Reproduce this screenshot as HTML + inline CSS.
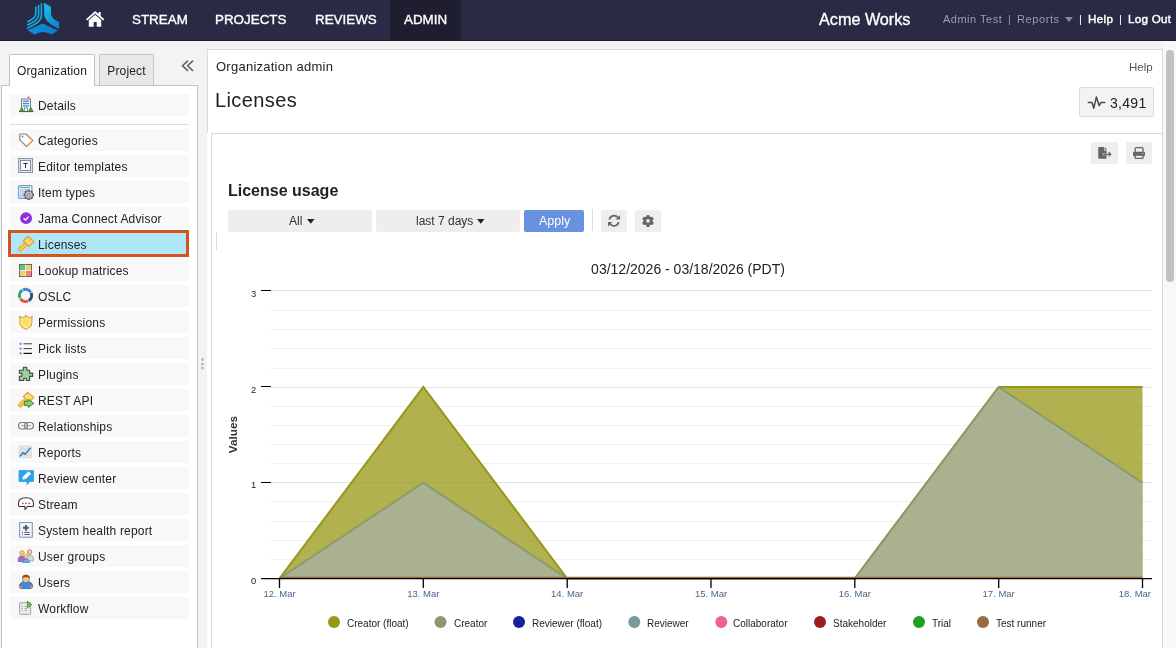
<!DOCTYPE html>
<html><head><meta charset="utf-8">
<style>
*{box-sizing:border-box;margin:0;padding:0}
html,body{width:1176px;height:648px;overflow:hidden;background:#f3f3f3;font-family:"Liberation Sans",sans-serif;color:#222;-webkit-font-smoothing:antialiased}
.abs{position:absolute}
#nav{position:absolute;left:0;top:0;width:1176px;height:41px;background:#2b2a44;border-bottom:1px solid #1e1d31}
.nt{position:absolute;top:12px;color:#fff;font-size:13.4px;line-height:16px;white-space:nowrap;-webkit-text-stroke:0.35px #fff}
.rt{position:absolute;top:12px;font-size:11px;line-height:14px;white-space:nowrap}
#side{position:absolute;left:1px;top:85px;width:197px;height:580px;background:#fff;border:1px solid #c4c4c4}
.tab{position:absolute;top:54px;border:1px solid #c4c4c4;border-bottom:none;font-size:12px;line-height:14px;padding-top:9px;letter-spacing:0.17px;text-align:center;border-radius:2px 2px 0 0;color:#222}
.item{position:absolute;left:10px;width:179px;height:22px;background:#f8f8f8;font-size:12px;line-height:24px;letter-spacing:0.18px;padding-left:28px;white-space:nowrap;color:#222}
.item svg{position:absolute;left:8px;top:3px}
.btn{position:absolute;background:#eeeeee;border-radius:2px}
</style></head><body><div style="position:absolute;left:0;top:0;width:1176px;height:648px;will-change:transform">
<div id="nav">
  <svg class="abs" style="left:22px;top:0px" width="44" height="40" viewBox="0 0 44 40">
    <defs><linearGradient id="lg1" x1="0" y1="0" x2="0.6" y2="1"><stop offset="0" stop-color="#1ec0f0"/><stop offset="1" stop-color="#0a8ad2"/></linearGradient>
    <linearGradient id="lg2" x1="0" y1="0" x2="1" y2="0"><stop offset="0" stop-color="#0c92d8"/><stop offset="1" stop-color="#0a7cc8"/></linearGradient></defs>
    <path d="M21.9,2.8 L29,6.8 L29,13.5 Q29.3,17.5 33,19.8 L37,22 L37,29 L30,24.9 Q23.6,21.2 22.2,15.5 Z" fill="url(#lg1)"/>
    <path d="M5.9,30.2 L18.8,24.2 Q20.3,23.5 21.8,24.1 L36,30.4 L29.6,34.6 Q21,29.5 12.3,34.6 Z" fill="url(#lg2)"/>
    <g fill="none" stroke="#12a6e2" stroke-width="1.7">
    <path d="M13.8,6.5 V13.5 Q13.6,16.8 10.5,19 L5.2,21.9"/>
    <path d="M16.6,5 V14.5 Q16.4,18.5 12.5,21.3 L5.2,25.2"/>
    <path d="M19.4,3.2 V15.5 Q19.2,20 14.5,23.3 L5.2,28.4"/>
    </g>
  </svg>
  <svg class="abs" style="left:86px;top:10px" width="20" height="18" viewBox="0 0 20 18"><path d="M9.2,1 L0,9.2 L1.3,10.6 L9.2,3.6 L17.1,10.6 L18.4,9.2 L14.7,5.9 V2 H12.6 V4 Z" fill="#fff"/><path d="M2.8,10.3 L9.2,4.7 L15.2,10.1 V16.8 H10.7 V12.1 H7.7 V16.8 H2.8 Z" fill="#fff"/></svg>
  <div class="nt" style="left:132px">STREAM</div>
  <div class="nt" style="left:215px">PROJECTS</div>
  <div class="nt" style="left:315px">REVIEWS</div>
  <div class="abs" style="left:390px;top:0;width:71px;height:40px;background:#1f1e30"></div>
  <div class="nt" style="left:404px">ADMIN</div>
  <div class="nt" style="left:819px;top:10px;font-size:16.2px;line-height:18px">Acme Works</div>
  <div class="rt" style="left:943px;color:#9c9cae;letter-spacing:0.5px">Admin Test</div>
  <div class="rt" style="left:1008px;color:#9c9cae">|</div>
  <div class="rt" style="left:1017px;color:#9c9cae;letter-spacing:0.6px">Reports</div>
  <svg class="abs" style="left:1065px;top:17px" width="8" height="5"><path d="M0 0H8L4 5Z" fill="#8a8a9c"/></svg>
  <div class="rt" style="left:1079px;color:#fff">|</div>
  <div class="rt" style="left:1088px;color:#fff;font-size:11.6px;letter-spacing:0.4px;-webkit-text-stroke:0.45px #fff">Help</div>
  <div class="rt" style="left:1119px;color:#fff">|</div>
  <div class="rt" style="left:1128px;color:#fff;font-size:11.6px;letter-spacing:0.3px;-webkit-text-stroke:0.45px #fff">Log Out</div>
</div>

<!-- SIDEBAR -->
<div id="side"></div>
<div class="tab" style="left:9px;width:86px;height:32px;background:#fff">Organization</div>
<div class="tab" style="left:99px;width:55px;height:31px;background:#e8e8e8">Project</div>
<svg class="abs" style="left:175px;top:55px" width="25" height="22" viewBox="175 55 25 22"><path d="M187.4,61.1 L182.5,65.75 L187.4,70.4 M192.5,61.1 L187.6,65.75 L192.5,70.4" stroke="#626262" stroke-width="1.7" fill="none" stroke-linecap="round" stroke-linejoin="round"/></svg>

<div class="item" style="top:94px">Details</div>
<div class="abs" style="left:10px;top:124px;width:179px;height:1px;background:#dcdcdc"></div>
<div class="item" style="top:129px">Categories</div>
<div class="item" style="top:155px">Editor templates</div>
<div class="item" style="top:181px">Item types</div>
<div class="item" style="top:207px">Jama Connect Advisor</div>
<div class="item" style="top:230px;left:8px;width:181px;height:27px;background:#b0e7f8;border:3px solid #d6521f;line-height:25px;padding-left:27px">Licenses</div>
<div class="item" style="top:259px">Lookup matrices</div>
<div class="item" style="top:285px">OSLC</div>
<div class="item" style="top:311px">Permissions</div>
<div class="item" style="top:337px">Pick lists</div>
<div class="item" style="top:363px">Plugins</div>
<div class="item" style="top:389px">REST API</div>
<div class="item" style="top:415px">Relationships</div>
<div class="item" style="top:441px">Reports</div>
<div class="item" style="top:467px">Review center</div>
<div class="item" style="top:493px">Stream</div>
<div class="item" style="top:519px">System health report</div>
<div class="item" style="top:545px">User groups</div>
<div class="item" style="top:571px">Users</div>
<div class="item" style="top:597px">Workflow</div>


<!-- sidebar icons -->
<svg class="abs" style="left:0;top:0" width="210" height="648" viewBox="0 0 210 648">
 <!-- details -->
 <rect x="21.5" y="99" width="9" height="12.5" fill="#f4f4f4" stroke="#7a7a7a" stroke-width="1"/>
 <rect x="23" y="100.6" width="6" height="1.3" fill="#2a9ae8"/><rect x="23" y="102.9" width="6" height="1.3" fill="#2a9ae8"/><rect x="23" y="105.2" width="6" height="1.3" fill="#2a9ae8"/>
 <rect x="24.5" y="107.8" width="3" height="3.7" fill="#fff" stroke="#7a7a7a" stroke-width="0.8"/>
 <circle cx="28.5" cy="97.3" r="0.9" fill="#e03030"/>
 <path d="M19,111.6 L21.7,106.2 L24.4,111.6 Z M28.1,111.6 L30.8,106.2 L33.5,111.6 Z" fill="#3aa03a"/>
 <path d="M19,111.6 H33.5" stroke="#555" stroke-width="1"/>
 <!-- categories -->
 <path d="M20,134 H26 L32.8,140.5 L26.5,146.5 L19.6,139.6 Z" fill="#fff" stroke="#8a8a8a" stroke-width="1.2" stroke-linejoin="round"/>
 <path d="M29.3,137.5 L32.8,140.5 L26.5,146.5" fill="none" stroke="#f4a04a" stroke-width="1.3" stroke-linejoin="round"/>
 <circle cx="22.6" cy="136.6" r="1" fill="#8a8a8a"/>
 <!-- editor templates -->
 <rect x="18.5" y="158.5" width="14" height="14" fill="#dde2ec" stroke="#8b95b0" stroke-width="1"/>
 <rect x="20.5" y="160.5" width="10" height="10" fill="#f8f9fc" stroke="#6a7590" stroke-width="0.8"/>
 <path d="M23.3,163.5 H27.7 M25.5,163.5 V168" stroke="#333" stroke-width="1"/>
 <!-- item types -->
 <rect x="18.6" y="185.6" width="13.3" height="12.8" rx="1" fill="#fff" stroke="#6a9ae0" stroke-width="1.2"/>
 <path d="M19.9,187.6 H29.9" stroke="#5ab85a" stroke-width="1.1"/>
 <rect x="19.9" y="189" width="10" height="8.2" fill="#b0ccf0"/>
 <path d="M21.5,190.5 V196 M23.5,190.5 H26.5 M23.5,192.5 H26.5 M23.5,194.5 H26.5" stroke="#fff" stroke-width="0.9" stroke-dasharray="0.9 1.1"/>
 <g transform="translate(28.8,194.8)">
  <rect x="-1.3" y="-5.2" width="2.6" height="10.4" fill="#666"/>
  <rect x="-1.3" y="-5.2" width="2.6" height="10.4" fill="#666" transform="rotate(45)"/>
  <rect x="-1.3" y="-5.2" width="2.6" height="10.4" fill="#666" transform="rotate(90)"/>
  <rect x="-1.3" y="-5.2" width="2.6" height="10.4" fill="#666" transform="rotate(135)"/>
  <circle r="3.8" fill="#c8c8c8" stroke="#666" stroke-width="0.8"/>
  <circle r="1.5" fill="#bcd8f8" stroke="#555" stroke-width="0.6"/>
 </g>
 <!-- jama -->
 <circle cx="26.1" cy="218.2" r="5.9" fill="#8f2be0"/>
 <path d="M23.6,218.3 L25.5,220 L28.7,216.6" fill="none" stroke="#fff" stroke-width="1.3"/>
 <!-- key -->
 <path d="M25,242.6 L27.4,245 L20.4,251.8 L18.3,249.7 L19.2,248.8 L18.6,248.2 L20.2,246.6 L20.8,247.2 L21.6,246.4 L21,245.8 L22.2,244.6 Z" fill="#f4d040" stroke="#e49a30" stroke-width="1" stroke-linejoin="round"/>
 <path d="M27.9,236.3 L33.9,241.4 L29.2,246.4 L23.3,241 Z" fill="#f8e070" stroke="#e49a30" stroke-width="1.2" stroke-linejoin="round"/>
 <path d="M28.6,239.3 L30.5,240.9" stroke="#e49a30" stroke-width="1.1"/>
 <!-- lookup -->
 <rect x="19.5" y="264.5" width="12" height="12" fill="#f6d060" stroke="#666" stroke-width="1"/>
 <rect x="20" y="265" width="5.5" height="5.5" fill="#5ac88a"/><rect x="25.5" y="270.5" width="5.5" height="5.5" fill="#f48080"/>
 <path d="M25.5,264.5 V276.5 M19.5,270.5 H31.5" stroke="#fff" stroke-width="0.7"/>
 <!-- oslc -->
 <g fill="none" stroke-width="3" transform="rotate(-28 25.6 295.4)">
 <path d="M25.9,289.3 A6.1,6.1 0 0 1 31.6,295" stroke="#3a86dc"/>
 <path d="M31.6,295.8 A6.1,6.1 0 0 1 25.9,301.5" stroke="#2a4a86"/>
 <path d="M25.2,301.5 A6.1,6.1 0 0 1 19.5,295.8" stroke="#d8604a"/>
 <path d="M19.5,295 A6.1,6.1 0 0 1 25.2,289.3" stroke="#2aa870"/>
 </g>
 <!-- permissions -->
 <defs><linearGradient id="shg" x1="0" y1="0" x2="0" y2="1"><stop offset="0" stop-color="#f6d860"/><stop offset="1" stop-color="#f8e878"/></linearGradient></defs>
 <path d="M19.9,317 L22.1,317.9 L25.9,316.3 L29.7,317.9 L31.9,317 V322.5 Q31.9,326.8 25.9,329.2 Q19.9,326.8 19.9,322.5 Z" fill="url(#shg)" stroke="#e3a52a" stroke-width="1.1" stroke-linejoin="round"/>
 <path d="M21.2,318.8 L22.2,319.2 L25.9,317.7 L29.6,319.2 L30.6,318.8 V322.5 Q30.6,325.9 25.9,327.8 Q21.2,325.9 21.2,322.5 Z" fill="none" stroke="#fff6c0" stroke-width="0.7"/>
 <circle cx="19.7" cy="316.6" r="0.9" fill="#e3a52a"/><circle cx="25.9" cy="315.6" r="0.9" fill="#e3a52a"/><circle cx="32.1" cy="316.6" r="0.9" fill="#e3a52a"/>
 <!-- pick lists -->
 <circle cx="20.6" cy="343.8" r="1.2" fill="#6aa0e8"/><circle cx="20.6" cy="348.6" r="1.2" fill="#6aa0e8"/><circle cx="20.6" cy="353.4" r="1.2" fill="#6aa0e8"/>
 <path d="M23.5,343.8 H32 M23.5,348.6 H32" stroke="#444" stroke-width="1"/><path d="M23.5,353.4 H32" stroke="#111" stroke-width="1.2"/>
 <!-- plugins -->
 <path d="M19.4,370.3 H23.3 V367.2 H26.8 V370.3 H29.6 V373.1 H32.7 V376.4 H29.6 V380.5 H26.4 V378.3 H23.8 V380.5 H19.4 V376.3 H21.8 V373.1 H19.4 Z" fill="#98d498" stroke="#444" stroke-width="1.1" stroke-linejoin="round"/>
 <!-- rest api -->
 <path d="M24.4,399.6 L26.8,402 L20.2,407.4 L18.2,405.4 L19,404.6 L18.5,404 L20,402.6 L20.6,403.2 L21.4,402.4 L20.8,401.8 L22,400.6 Z" fill="#f4d040" stroke="#e49a30" stroke-width="1" stroke-linejoin="round"/>
 <path d="M27.7,392.4 L33.8,397.4 L29,402.4 L23.3,396.7 Z" fill="#f8e070" stroke="#e49a30" stroke-width="1.2" stroke-linejoin="round"/>
 <path d="M24.3,401.3 H28.3 V399.3 L33.8,403.4 L28.3,407.5 V405.4 H24.3 Z" fill="#8cc880" stroke="#2e8a2e" stroke-width="1" stroke-linejoin="round"/>
 <!-- relationships -->
 <rect x="18.5" y="422.5" width="9" height="6.5" rx="3.2" fill="none" stroke="#777" stroke-width="1.2"/>
 <rect x="24.5" y="422.5" width="9" height="6.5" rx="3.2" fill="none" stroke="#777" stroke-width="1.2"/>
 <path d="M21,425.7 H31" stroke="#999" stroke-width="1"/>
 <!-- reports -->
 <rect x="19" y="446" width="12.5" height="11.5" fill="#e6e6e6" stroke="#d0d0d0" stroke-width="0.6"/>
 <path d="M20,449 H30.5 M20,452 H30.5 M20,455 H30.5" stroke="#c8c8c8" stroke-width="0.7"/>
 <path d="M19.8,456.5 L23,452.8 L25,454.2 L30.8,447.6" fill="none" stroke="#2a78d0" stroke-width="1.4"/>
 <!-- review center -->
 <path d="M19,470.5 H33.5 V481.5 H29.8 L27,484.6 V481.5 H19 Z" fill="#2aa3e6" stroke="#2aa3e6" stroke-width="0.8" stroke-linejoin="round"/>
 <path d="M22.3,479.6 L23,476.4 L28.6,471.3 L31.1,473.7 L25.6,478.9 Z" fill="#fff"/><path d="M23,476.4 L25.6,478.9" stroke="#9ad0f0" stroke-width="0.6"/>
 <!-- stream -->
 <path d="M26,497.8 Q33.5,497.8 33.5,503.5 V505.2 Q33.5,506.5 32,506.5 H27.5 L25,509.5 V506.5 H20 Q18.5,506.5 18.5,505.2 V503.5 Q18.5,497.8 26,497.8 Z" fill="#fff" stroke="#333" stroke-width="1.1" stroke-linejoin="round"/>
 <circle cx="22.8" cy="503.3" r="0.9" fill="#e03a2a"/><circle cx="26" cy="503.3" r="0.9" fill="#e03a2a"/><circle cx="29.2" cy="503.3" r="0.9" fill="#e03a2a"/>
 <!-- system health -->
 <rect x="19.7" y="522.6" width="12.6" height="14.6" fill="#f4f4f6" stroke="#7a8fbf" stroke-width="1"/>
 <path d="M25.9,524.9 V530.7 M23,527.8 H28.8" stroke="#4a5578" stroke-width="1.9"/>
 <path d="M24.2,532.4 H29.9 M24.2,534.5 H29.9" stroke="#4a5578" stroke-width="0.9"/>
 <circle cx="22.5" cy="532.4" r="0.55" fill="#4a5578"/><circle cx="22.5" cy="534.5" r="0.55" fill="#4a5578"/>
 <!-- user groups -->
 <circle cx="29.6" cy="552" r="2.3" fill="#f2c8a0" stroke="#a07050" stroke-width="0.7"/>
 <path d="M26,558 Q26,555 29.6,555 Q33.3,555 33.3,558 V561 H26 Z" fill="#d0d8e0" stroke="#8898a8" stroke-width="0.7"/>
 <circle cx="22" cy="553" r="2.3" fill="#f6d070" stroke="#c89020" stroke-width="0.7"/>
 <path d="M18.2,559.5 Q18.2,556 22,556 Q25.6,556 25.6,559.5 V561.5 H18.2 Z" fill="#a070d0" stroke="#7050a0" stroke-width="0.7"/>
 <circle cx="26" cy="556.5" r="2.1" fill="#f2c8a0" stroke="#c09060" stroke-width="0.7"/>
 <path d="M22.5,562.5 Q22.5,559 26,559 Q29.5,559 29.5,562.5 Z" fill="#6aa8e8" stroke="#4a80c0" stroke-width="0.7"/>
 <!-- users -->
 <path d="M19.3,586.5 Q19.3,581.5 26,581.5 Q32.7,581.5 32.7,586.5 Q32.7,588.5 30.5,588.5 H21.5 Q19.3,588.5 19.3,586.5 Z" fill="#3a8ae6" stroke="#2a68b8" stroke-width="0.8"/>
 <circle cx="20.5" cy="586.8" r="1.4" fill="#f08a3a"/><circle cx="31.5" cy="586.8" r="1.4" fill="#f08a3a"/>
 <path d="M22.5,578 Q22.5,575 26,575 Q29.5,575 29.5,578 V579.5 Q29.5,582.5 26,582.5 Q22.5,582.5 22.5,579.5 Z" fill="#f2c49a" stroke="#a06030" stroke-width="0.7"/>
 <path d="M22.4,578.5 Q22.2,574.8 26,574.8 Q29.8,574.8 29.6,578.5 Q28,576.8 26,577.3 Q24,576.8 22.4,578.5 Z" fill="#8a5020"/>
 <!-- workflow -->
 <rect x="19.6" y="602.6" width="11" height="11.8" rx="0.8" fill="#eaeaea" stroke="#9a9a9a" stroke-width="0.9"/>
 <path d="M21.5,606.5 H23 M21.5,608.5 H23 M21.5,610.5 H23 M24.5,606.5 H27 M24.5,608.5 H27 M24.5,610.5 H27" stroke="#aaa" stroke-width="0.9"/>
 <path d="M27.4,601.2 L31.8,604.6 L27.4,608 Z" fill="#5ac840" stroke="#3a9a2a" stroke-width="0.8"/>
</svg>
<!-- splitter dots -->
<svg class="abs" style="left:195px;top:350px" width="15" height="25" viewBox="195 350 15 25"><g fill="#bcbcbc"><circle cx="202.5" cy="359.6" r="1.5"/><circle cx="202.5" cy="363.9" r="1.5"/><circle cx="202.5" cy="368.1" r="1.5"/></g></svg>
<!-- MAIN -->
<div class="abs" style="left:207px;top:49px;width:956px;height:620px;background:#fff;border-top:1px solid #d9d9d9;border-right:1px solid #d9d9d9"></div>
<div class="abs" style="left:207px;top:49px;width:1px;height:84px;background:#d9d9d9"></div>
<div class="abs" style="left:216px;top:59px;font-size:13px;line-height:15px;letter-spacing:0.25px">Organization admin</div>
<div class="abs" style="left:1129px;top:60px;font-size:11.5px;line-height:14px;color:#555">Help</div>
<div class="abs" style="left:215px;top:89px;font-size:20px;line-height:22px;color:#222;letter-spacing:0.4px">Licenses</div>
<div class="abs" style="left:1079px;top:87px;width:75px;height:30px;background:#f3f3f3;border:1px solid #dcdcdc;border-radius:2px"></div>
<svg class="abs" style="left:1087px;top:95px" width="19" height="15" viewBox="0 0 19 15"><path d="M1.3,7.6 H5 L6.8,13.2 L9.4,1.9 L12.2,10.7 L13.8,7.6 H17.7" stroke="#4a4a4a" stroke-width="1.5" fill="none" stroke-linejoin="round" stroke-linecap="round"/></svg>
<div class="abs" style="left:1110px;top:95px;font-size:14px;line-height:16px;color:#222;letter-spacing:0.3px">3,491</div>

<!-- inner panel -->
<div class="abs" style="left:211px;top:133px;width:952px;height:540px;background:#fff;border:1px solid #d9d9d9"></div>
<div class="btn" style="left:1091px;top:142px;width:27px;height:22px"></div>

<div class="btn" style="left:1126px;top:142px;width:26px;height:22px"></div>


<div class="abs" style="left:228px;top:182px;font-size:16px;line-height:18px;font-weight:bold;color:#222">License usage</div>
<div class="btn" style="left:228px;top:210px;width:144px;height:22px"></div>
<div class="abs" style="left:289px;top:214px;font-size:12px;line-height:14px;color:#333">All</div>
<svg class="abs" style="left:307px;top:219px" width="8" height="5"><path d="M0 0H7.5L3.75 4.8Z" fill="#222"/></svg>
<div class="btn" style="left:376px;top:210px;width:144px;height:22px"></div>
<div class="abs" style="left:416px;top:214px;font-size:12px;line-height:14px;color:#333">last 7 days</div>
<svg class="abs" style="left:477px;top:219px" width="8" height="5"><path d="M0 0H7.5L3.75 4.8Z" fill="#222"/></svg>
<div class="abs" style="left:524px;top:210px;width:60px;height:22px;background:#6892e0;border-radius:2px"></div>
<div class="abs" style="left:539px;top:214px;font-size:12.5px;line-height:14px;color:#fff">Apply</div>
<div class="abs" style="left:592px;top:209px;width:1px;height:22px;background:#dddddd"></div>
<div class="btn" style="left:601px;top:210px;width:26px;height:22px"></div>

<div class="btn" style="left:635px;top:210px;width:26px;height:22px"></div>

<div class="abs" style="left:216px;top:232px;width:1px;height:18px;background:#dddddd"></div>

<svg class="abs" style="left:0;top:0" width="1176" height="648" viewBox="0 0 1176 648">
 <path d="M1099.2,147.1 H1104.2 V150.4 H1106.6 V153.4 H1102.8 V155.2 H1106.6 V157.8 Q1106.6,158.8 1105.6,158.8 H1099.2 Q1098.2,158.8 1098.2,157.8 V148.1 Q1098.2,147.1 1099.2,147.1 Z" fill="#666"/>
 <path d="M1104.9,147.1 L1106.6,148.9 V149.7 H1104.9 Z" fill="#666"/>
 <path d="M1103.4,154.3 H1110.6 M1108.6,152.2 L1110.8,154.3 L1108.6,156.4" stroke="#666" stroke-width="1.3" fill="none"/>
 <rect x="1135.2" y="147.7" width="7.8" height="5" rx="1" fill="none" stroke="#666" stroke-width="1.3"/>
 <rect x="1133" y="151.8" width="12" height="4.6" rx="1.3" fill="#666"/>
 <rect x="1135.2" y="155.2" width="7.8" height="3.2" rx="0.6" fill="#eee" stroke="#666" stroke-width="1.3"/>
 <circle cx="1142.7" cy="153.5" r="0.6" fill="#eee"/>
 <g fill="none" stroke="#666" stroke-width="1.7">
 <path d="M609.4,219.6 A4.7,4.7 0 0 1 617.8,217.6"/>
 <path d="M618.6,222 A4.7,4.7 0 0 1 610.2,224"/>
 </g>
 <path d="M620,215.2 V219.6 H615.6 Z M608,226.4 V222 H612.4 Z" fill="#666"/>
 <g fill="#666" transform="translate(648,220.9)">
 <rect x="-1.8" y="-6" width="3.6" height="12" rx="1.5"/>
 <rect x="-1.8" y="-6" width="3.6" height="12" rx="1.5" transform="rotate(60)"/>
 <rect x="-1.8" y="-6" width="3.6" height="12" rx="1.5" transform="rotate(120)"/>
 <circle r="4.3"/>
 <circle r="1.8" fill="#eee"/>
 </g>
</svg>
<!-- CHART -->
<svg class="abs" style="left:0;top:0" width="1176" height="648" viewBox="0 0 1176 648">
  <path d="M271 290.5H1152M271 387.5H1152M271 482.5H1152" stroke="#e2e2e2" stroke-width="1"/><path d="M271 310.5H1152M271 329.5H1152M271 348.5H1152M271 368.5H1152M271 406.5H1152M271 425.5H1152M271 444.5H1152M271 463.5H1152M271 501.5H1152M271 521.5H1152M271 540.5H1152M271 559.5H1152" stroke="#f0f0f0" stroke-width="1"/>
  <polygon points="279.5,578.5 423.3,387.0 567.2,578.5 854.8,578.5 998.7,387.0 1142.5,387.0 1142.5,578.5 279.5,578.5" fill="#979715" fill-opacity="0.75"/>
  <polyline points="279.5,578.5 423.3,387.0 567.2,578.5 854.8,578.5 998.7,387.0 1142.5,387.0" fill="none" stroke="#979715" stroke-width="2"/>
  <polygon points="279.5,578.5 423.3,482.75 567.2,578.5 854.8,578.5 998.7,387.0 1142.5,482.75 1142.5,578.5 279.5,578.5" fill="#aab190"/>
  <polyline points="279.5,578.5 423.3,482.75 567.2,578.5 854.8,578.5 998.7,387.0 1142.5,482.75" fill="none" stroke="#8b9a6c" stroke-width="2"/>
  <path d="M279.5 577.4H1142.5" stroke="#9a6a40" stroke-width="1.4"/>
  <path d="M261 578.6H1152" stroke="#000" stroke-width="1.3"/>
  <g stroke="#000" stroke-width="1.3">
    <path d="M261 290.5H271M261 386.5H271M261 482.5H271" stroke-width="1.15"/>
    <path d="M279.5 578V588M423.3 578V588M567.2 578V588M711 578V588M854.8 578V588M998.7 578V588M1142.5 578V588"/>
  </g>
  <g font-family="Liberation Sans" font-size="9" fill="#222">
    <text x="256.2" y="297" text-anchor="end" font-size="9.4">3</text>
    <text x="256.2" y="393" text-anchor="end" font-size="9.4">2</text>
    <text x="256.2" y="488.3" text-anchor="end" font-size="9.4">1</text>
    <text x="256.2" y="584" text-anchor="end" font-size="9.4">0</text>
  </g>
  <g font-family="Liberation Sans" font-size="9.5" fill="#4a6585" text-anchor="middle">
    <text x="279.5" y="597">12. Mar</text>
    <text x="423.3" y="597">13. Mar</text>
    <text x="567.2" y="597">14. Mar</text>
    <text x="711" y="597">15. Mar</text>
    <text x="854.8" y="597">16. Mar</text>
    <text x="998.7" y="597">17. Mar</text>
    <text x="1151" y="597" text-anchor="end">18. Mar</text>
  </g>
  <text x="688" y="274" font-family="Liberation Sans" font-size="14" fill="#222" text-anchor="middle">03/12/2026 - 03/18/2026 (PDT)</text>
  <text transform="translate(237.3,434.6) rotate(-90)" font-family="Liberation Sans" font-size="11.8" font-weight="bold" fill="#333" text-anchor="middle">Values</text>
  <g font-family="Liberation Sans" font-size="10" fill="#222" transform="translate(0,1)">
    <circle cx="334" cy="621" r="6" fill="#979715"/><text x="347" y="626">Creator (float)</text>
    <circle cx="440.5" cy="621" r="6" fill="#8b9a6c"/><text x="454" y="626">Creator</text>
    <circle cx="519" cy="621" r="6" fill="#1a1f9a"/><text x="532" y="626">Reviewer (float)</text>
    <circle cx="634.3" cy="621" r="6" fill="#7a9a9a"/><text x="647" y="626">Reviewer</text>
    <circle cx="721.3" cy="621" r="6" fill="#f06090"/><text x="733" y="626">Collaborator</text>
    <circle cx="820" cy="621" r="6" fill="#9a2020"/><text x="833" y="626">Stakeholder</text>
    <circle cx="919" cy="621" r="6" fill="#20a020"/><text x="932" y="626">Trial</text>
    <circle cx="983" cy="621" r="6" fill="#9a6a40"/><text x="996" y="626">Test runner</text>
  </g>
</svg>

<!-- scrollbar -->
<div class="abs" style="left:1163px;top:41px;width:13px;height:607px;background:#f8f8f8"></div>
<div class="abs" style="left:1166px;top:50px;width:8px;height:232px;background:#c1c1c1;border-radius:4px"></div>
</div></body></html>
